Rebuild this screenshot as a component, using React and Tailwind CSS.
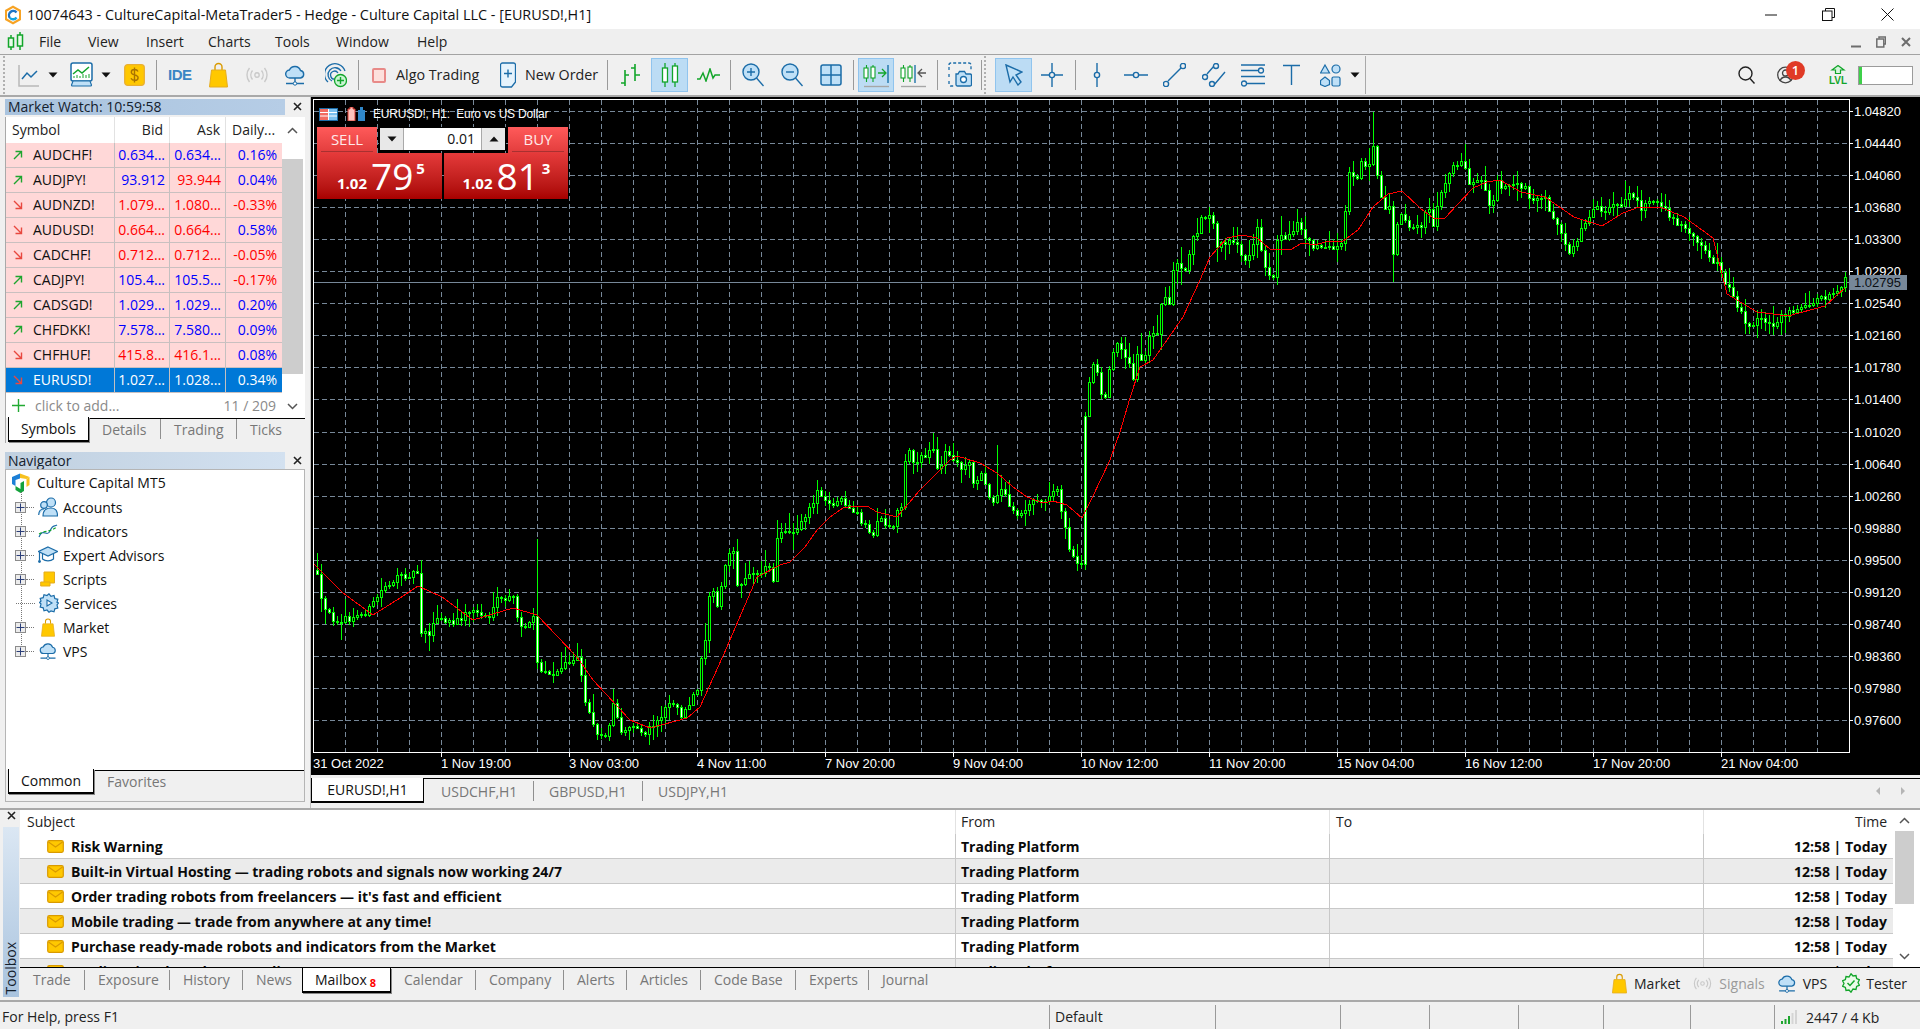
import React from "react";

const B = "#1b6ca8", L = "#bfe0f7", G = "#12a52a", Y = "#ffc800", YD = "#d99a00";

/* ---------- chart data, traced from the picture in page coordinates ---------- */
const PATH = [[313,570],[317,577],[322,607],[333,618],[350,620],[368,610],[385,585],[400,577],[417,571],[421,630],[429,632],[437,618],[453,624],[470,610],[490,617],[497,600],[513,598],[518,623],[528,627],[533,617],[537,663],[542,675],[557,673],[563,663],[577,660],[582,677],[585,702],[590,715],[597,733],[607,737],[613,700],[618,720],[622,732],[633,727],[643,733],[657,720],[670,700],[682,717],[693,695],[698,690],[702,647],[707,630],[710,578],[717,607],[725,562],[730,552],[734,553],[738,598],[743,578],[760,570],[770,567],[773,578],[778,530],[793,530],[805,518],[813,500],[817,493],[822,493],[825,500],[837,503],[842,496],[845,507],[850,512],[857,513],[862,522],[873,533],[878,516],[882,523],[893,524],[897,509],[901,510],[905,463],[910,444],[913,462],[920,458],[933,451],[937,465],[942,464],[946,451],[950,458],[962,468],[970,462],[973,480],[982,473],[989,495],[993,503],[997,495],[1002,488],[1006,497],[1009,508],[1017,517],[1025,510],[1029,503],[1042,502],[1048,495],[1057,490],[1062,520],[1065,527],[1069,552],[1073,555],[1077,565],[1081,565],[1085,416],[1089,380],[1093,366],[1097,372],[1102,398],[1106,398],[1109,366],[1113,352],[1117,343],[1127,357],[1133,377],[1137,357],[1145,357],[1150,333],[1157,333],[1162,293],[1170,303],[1173,273],[1178,260],[1187,273],[1190,243],[1197,233],[1202,217],[1210,215],[1213,220],[1217,247],[1230,240],[1242,253],[1247,265],[1257,228],[1262,253],[1267,272],[1273,278],[1277,237],[1287,240],[1297,220],[1305,240],[1317,247],[1337,248],[1342,240],[1349,175],[1358,177],[1362,158],[1367,172],[1373,148],[1378,180],[1382,207],[1390,205],[1393,257],[1398,212],[1405,223],[1417,227],[1422,228],[1427,200],[1433,227],[1438,203],[1447,180],[1453,165],[1462,158],[1470,188],[1482,178],[1490,208],[1497,183],[1518,186],[1530,195],[1545,200],[1562,233],[1567,257],[1578,235],[1592,211],[1619,205],[1628,196],[1645,208],[1660,200],[1668,218],[1685,228],[1702,243],[1715,262],[1727,285],[1745,324],[1760,318],[1776,322],[1790,312],[1806,305],[1825,296],[1846,279]];

const MA = [[313,563],[343,593],[373,615],[400,598],[418,586],[442,597],[473,620],[513,608],[537,615],[577,657],[593,680],[630,720],[650,728],[687,718],[700,707],[727,647],[757,577],[780,565],[790,562],[805,547],[817,530],[830,517],[843,508],[855,506],[867,506],[877,512],[897,517],[920,490],[933,477],[950,460],[957,456],[980,463],[997,473],[1013,487],[1027,497],[1043,503],[1053,501],[1067,505],[1082,518],[1092,498],[1110,460],[1120,432],[1130,398],[1140,367],[1153,360],[1167,340],[1183,317],[1200,280],[1210,257],[1227,238],[1242,235],[1257,238],[1270,249],[1290,250],[1302,243],[1315,245],[1325,242],[1343,241],[1358,230],[1373,207],[1388,194],[1402,191],[1420,208],[1433,218],[1445,218],[1457,205],[1473,188],[1487,182],[1500,180],[1521,192],[1545,197],[1574,217],[1602,226],[1623,213],[1639,207],[1660,207],[1684,217],[1713,238],[1727,294],[1757,312],[1788,316],[1825,306],[1845,288]];

const SPIKE_HIGH = { 1373: 112, 537: 539, 997: 445, 1417: 215, 1641: 190 };
const SPIKE_LOW = { 1393: 282, 1085: 570, 653: 740 };

function at(x) {
  for (let i = 1; i < PATH.length; i++) {
    if (x <= PATH[i][0]) {
      const [a, b] = PATH[i - 1], [c, d] = PATH[i];
      return b + ((d - b) * (x - a)) / (c - a);
    }
  }
  return PATH[PATH.length - 1][1];
}

function buildCandles() {
  let s = 12345;
  const r = () => ((s = (s * 16807) % 2147483647) / 2147483647);
  let wick = "", bull = "", bear = "";
  let prev = at(313);
  for (let x = 317; x <= 1845; x += 4) {
    const amp = x > 1500 ? 10 : 7;
    const c = Math.round(at(x) + (r() - 0.5) * amp);
    const o = Math.round(prev);
    const top = Math.min(o, c), bot = Math.max(o, c) === top ? top + 1 : Math.max(o, c);
    const hi = SPIKE_HIGH[x] ?? Math.round(top - 1 - r() * r() * 20);
    const lo = SPIKE_LOW[x] ?? Math.round(bot + 1 + r() * r() * 18);
    wick += `M${x + 0.5} ${hi}V${lo}`;
    const rect = `M${x - 0.5} ${top + 0.5}h2V${bot + 0.5}h-2Z`;
    if (c < o && x !== 1085) bull += rect;
    else bear += rect;
    prev = c;
  }
  return { wick, bull, bear };
}

const PRICES = ["1.04820","1.04440","1.04060","1.03680","1.03300","1.02920","1.02540","1.02160","1.01780","1.01400","1.01020","1.00640","1.00260","0.99880","0.99500","0.99120","0.98740","0.98360","0.97980","0.97600"];
const TIMES = ["31 Oct 2022","1 Nov 19:00","3 Nov 03:00","4 Nov 11:00","7 Nov 20:00","9 Nov 04:00","10 Nov 12:00","11 Nov 20:00","15 Nov 04:00","16 Nov 12:00","17 Nov 20:00","21 Nov 04:00"];

function ChartCanvas() {
  const { wick, bull, bear } = React.useMemo(buildCandles, []);
  const vx = [];
  for (let x = 345.5; x < 1848; x += 32) vx.push(x);
  const hy = PRICES.map((_, k) => Math.round(111 + k * 32.05) + 0.5);
  return (
    <svg viewBox="311 97 1609 678" className="block w-full h-full font-['Liberation_Sans',sans-serif]" shapeRendering="crispEdges">
      <rect x="311" y="97" width="1609" height="678" fill="#000" />
      <g stroke="#778899" strokeWidth="1" strokeDasharray="5 3">
        {vx.map((x) => <path key={x} d={`M${x} 100V752`} />)}
        {hy.map((y) => <path key={y} d={`M314 ${y}H1848`} />)}
      </g>
      <path d="M314 282.5H1849" stroke="#778899" />
      <path d={wick} stroke="#00ff00" fill="none" />
      <path d={bull} stroke="#00ff00" fill="#000" />
      <path d={bear} stroke="#00ff00" fill="#fff" />
      <polyline points={MA.map((p) => p.join(",")).join(" ")} fill="none" stroke="#ff0000" strokeWidth="1" />
      <path d="M313.5 99.5H1849V752.5H313.5Z" fill="none" stroke="#fff" />
      {hy.map((y, k) => (
        <g key={y}>
          <path d={`M1849 ${y}h4`} stroke="#fff" />
          <text x="1854" y={y + 4.5} fill="#fff" fontSize="13" shapeRendering="auto">{PRICES[k]}</text>
        </g>
      ))}
      <rect x="1849" y="275" width="58" height="15" fill="#778899" />
      <text x="1854" y="287" fill="#0b0f14" fontSize="13">1.02795</text>
      {TIMES.map((t, k) => (
        <g key={t}>
          {k > 0 && <path d={`M${441.5 + (k - 1) * 128} 752v5`} stroke="#fff" />}
          <text x={k === 0 ? 313 : 441 + (k - 1) * 128} y="768" fill="#fff" fontSize="13">{t}</text>
        </g>
      ))}
    </svg>
  );
}

/* ---------- icons ---------- */
const Ico = ({ w = 22, h = 24, vb, className = "", children }) => (
  <svg width={w} height={h} viewBox={vb || `0 0 ${w} ${h}`} fill="none" className={"shrink-0 " + className}>{children}</svg>
);
const Caret = ({ className = "" }) => (
  <Ico w={10} h={6} className={className}><path d="M0.5 0.5h9L5 5.5Z" fill="#111" /></Ico>
);
const Sep = ({ className = "" }) => <div className={"w-px h-[30px] bg-[#9a9a9a] shrink-0 " + className} />;
const Grip = ({ className = "" }) => <div className={"w-[3px] h-[38px] shrink-0 border-l-2 border-dotted border-[#b0b0b0] " + className} />;
const Active = ({ className = "", children }) => (
  <div className={"h-[34px] shrink-0 flex items-center justify-center bg-[#bcdcf4] border border-[#90c4ee] " + className}>{children}</div>
);

const IcoLine = () => (<Ico w={22} h={24}><path d="M1 2v21h20" stroke="#b8b8b8" strokeWidth="1.5" /><path d="M4 16l5-6 4 4 6-6" stroke={B} strokeWidth="1.5" /></Ico>);
const IcoMonitor = () => (<Ico w={23} h={26}><rect x="1" y="1" width="21" height="18" rx="2" fill="#fff" stroke={B} strokeWidth="1.5" /><path d="M3 12l5-4 4 3 7-6" stroke={G} strokeWidth="1.5" /><path d="M4 16v-2M7 16v-3M10 16v-2M13 16v-4M16 16v-3M19 16v-4" stroke={G} /><path d="M3 19h17l1.5 4a1 1 0 01-1 1H2.5a1 1 0 01-1-1Z" fill={L} stroke={B} strokeWidth="1.2" /></Ico>);
const IcoDollar = () => (<Ico w={21} h={22}><rect x="0.7" y="0.7" width="19.6" height="20.6" rx="3" fill={Y} stroke="#eab030" strokeWidth="1.3" /><path d="M14 7.5c-.6-1.4-2-2-3.500-2-1.800 0-3.200 1-3.200 2.700 0 3.600 6.800 1.800 6.800 5.500 0 1.700-1.500 2.700-3.400 2.700-1.700 0-3-.8-3.700-2.200M10.500 3.500v15" stroke="#a97400" strokeWidth="1.4" /></Ico>);
const IcoBag = ({ w = 19, h = 26 }) => (<Ico w={w} h={h} vb="0 0 19 26"><path d="M6 8V5a3.500 3.500 0 017 0v3" stroke={YD} strokeWidth="1.4" /><path d="M2.500 8h14l2 17H.5Z" fill={Y} stroke="#e5ac1e" /></Ico>);
const IcoSignal = ({ w = 22, h = 16 }) => (<Ico w={w} h={h} vb="0 0 22 16"><g stroke="#c9c9c9" strokeWidth="1.4"><circle cx="11" cy="8" r="2.200" /><path d="M6.500 3.500a7 7 0 000 9M15.500 3.500a7 7 0 010 9M3.500 1a11 11 0 000 14M18.500 1a11 11 0 010 14" /></g></Ico>);
const IcoCloud = ({ w = 20, h = 24 }) => (<Ico w={w} h={h} vb="0 0 20 24"><path d="M5 15a4 4 0 01-.6-8A6 6 0 0115.500 7.500 3.800 3.800 0 0115.500 15Z" fill={L} stroke={B} strokeWidth="1.4" /><path d="M10 15v5M1 20.500h18" stroke={B} strokeWidth="1.4" /><circle cx="10" cy="20.500" r="1.700" fill="#fff" stroke={B} /></Ico>);
const IcoGlobe = () => (<Ico w={22} h={26}><g stroke={B} strokeWidth="1.3"><path d="M3 20A10.500 10.500 0 1120 9" /><path d="M7 19A7 7 0 1116 9" /><path d="M10.500 17a4 4 0 112.500-6" /></g><circle cx="15.500" cy="18.500" r="6" fill="#c9f5d2" stroke={G} strokeWidth="1.3" /><path d="M15.500 15v7M12 18.500h7" stroke={G} strokeWidth="1.4" /></Ico>);
const IcoOrder = () => (<Ico w={16} h={26}><path d="M2.500 1h11a2 2 0 012 2v17l-4 5h-9a2 2 0 01-2-2V3a2 2 0 012-2Z" fill="#e6f3fc" stroke={B} strokeWidth="1.3" /><path d="M8 7.500v8M4 11.500h8" stroke={B} strokeWidth="1.4" /></Ico>);
const IcoBars = () => (<Ico w={21} h={24}><g stroke={G} strokeWidth="1.600"><path d="M5 7v16M1 20h4M5 12h4" /><path d="M15 1v17M11 5h4M15 12h5" /></g></Ico>);
const IcoCandles = () => (<Ico w={18} h={26}><g stroke={G} strokeWidth="1.300" fill="#fff"><path d="M4 1v24M14 1v24" /><rect x="1.500" y="6" width="5" height="14" /><rect x="11.500" y="4" width="5" height="16" /></g></Ico>);
const IcoWave = () => (<Ico w={23} h={14}><path d="M0 11h3l3-6 3 8 4-12 3 9 2-3h5" stroke={G} strokeWidth="1.500" /></Ico>);
const IcoZoom = ({ plus }) => (<Ico w={22} h={24}><circle cx="9" cy="9" r="8" fill={L} stroke={B} strokeWidth="1.400" /><path d="M14.500 15l7 8" stroke={B} strokeWidth="1.400" /><path d={plus ? "M9 5v8M5 9h8" : "M5 9h8"} stroke={B} strokeWidth="1.400" /></Ico>);
const IcoGrid = () => (<Ico w={22} h={22}><rect x="1" y="1" width="20" height="20" rx="2" fill={L} stroke={B} strokeWidth="1.500" /><path d="M11 1v20M1 11h20" stroke={B} strokeWidth="1.500" /></Ico>);
const IcoShift = ({ active }) => (<Ico w={27} h={26}>
  <g stroke={G} strokeWidth="1.100" fill="#fff"><path d="M3.500 3v17M10 3v17" /><rect x="1" y="6" width="4" height="10" /><rect x="8" y="5" width="4" height="11" /></g>
  {active
    ? <g stroke="#0e6aa5" strokeWidth="1.300"><path d="M25 3v18" /><path d="M15 11h7M19 7l4 4-4 4" stroke={G} /></g>
    : <g stroke="#0e6aa5" strokeWidth="1.300"><path d="M15 3v18" /><path d="M26 11h-7M22 7l-4 4 4 4" stroke="#555" /></g>}
  <path d="M1 24.500h25" stroke="#a6a6a6" strokeWidth="1.400" />
</Ico>);
const IcoCamera = () => (<Ico w={24} h={26}><path d="M1 8V3a2 2 0 012-2h18a2 2 0 012 2v5M1 12v3M1 19v3a2 2 0 002 2h3" stroke={B} strokeWidth="1.300" strokeDasharray="3 2" /><path d="M8 12h2l1.500-2.500h5L18 12h4a1.500 1.500 0 011.500 1.500v9A1.500 1.500 0 0122 24H9.500A1.500 1.500 0 018 22.500Z" fill={L} stroke={B} strokeWidth="1.300" /><circle cx="15.500" cy="17.500" r="3" fill="#fff" stroke={B} strokeWidth="1.300" /></Ico>);
const IcoCursor = () => (<Ico w={18} h={22}><path d="M1 1l16 7-6 3 5 7-3 3-5-8-3 5Z" fill={L} stroke={B} strokeWidth="1.400" /></Ico>);
const IcoCross = () => (<Ico w={22} h={24}><path d="M11 0v9M11 15v9M0 12h8M14 12h8" stroke={B} strokeWidth="1.400" /><circle cx="11" cy="12" r="2.600" stroke={B} strokeWidth="1.400" /></Ico>);
const IcoV = () => (<Ico w={14} h={24}><path d="M7 0v9M7 15v9" stroke={B} strokeWidth="1.400" /><circle cx="7" cy="12" r="2.600" stroke={B} strokeWidth="1.400" /></Ico>);
const IcoH = () => (<Ico w={24} h={10}><path d="M0 5h9M15 5h9" stroke={B} strokeWidth="1.400" /><circle cx="12" cy="5" r="2.600" stroke={B} strokeWidth="1.400" /></Ico>);
const IcoTrend = () => (<Ico w={23} h={24}><path d="M5 18L18 5" stroke={B} strokeWidth="1.400" /><circle cx="3" cy="21" r="2.600" stroke={B} strokeWidth="1.400" /><circle cx="20" cy="3" r="2.600" stroke={B} strokeWidth="1.400" /></Ico>);
const IcoChannel = () => (<Ico w={24} h={24}><path d="M5 11l7-8M12 22l11-13" stroke={B} strokeWidth="1.400" /><circle cx="3" cy="14" r="2.500" fill="#f0f0f0" stroke={B} strokeWidth="1.400" /><circle cx="14" cy="3" r="2.500" fill="#f0f0f0" stroke={B} strokeWidth="1.400" /><circle cx="10" cy="21" r="2.500" fill="#f0f0f0" stroke={B} strokeWidth="1.400" /></Ico>);
const IcoFib = () => (<Ico w={24} h={24}><path d="M0 2h24M0 7.500h18M0 13.500h24M6 20.500h18" stroke={B} strokeWidth="1.400" /><circle cx="20" cy="7.500" r="2.500" fill="#f0f0f0" stroke={B} strokeWidth="1.300" /><circle cx="3" cy="20.500" r="2.500" fill="#f0f0f0" stroke={B} strokeWidth="1.300" /></Ico>);
const IcoT = () => (<Ico w={17} h={22}><path d="M0 1.500h17M8.500 1.500V21" stroke={B} strokeWidth="1.400" /></Ico>);
const IcoShapes = () => (<Ico w={21} h={24}><path d="M5 2l4.500 8h-9Z" fill={L} stroke={B} strokeWidth="1.200" /><circle cx="16" cy="6" r="4" fill={L} stroke={B} strokeWidth="1.200" /><path d="M5 14l4.500 3.500v4L5 23.500l-4.500-2v-4Z" fill={L} stroke={B} strokeWidth="1.200" /><rect x="12" y="14" width="8" height="9" rx="1.500" fill={L} stroke={B} strokeWidth="1.200" /></Ico>);
const IcoSearch = () => (<Ico w={17} h={18}><circle cx="7.500" cy="7.500" r="6.500" stroke="#222" strokeWidth="1.400" /><path d="M12 12.500l4.500 5" stroke="#222" strokeWidth="1.400" /></Ico>);
const IcoUser = () => (<Ico w={17} h={18}><circle cx="8.500" cy="9" r="7.800" stroke="#444" strokeWidth="1.300" /><circle cx="8.500" cy="7" r="3" stroke="#444" strokeWidth="1.300" /><path d="M3 15c1-3 3-4 5.500-4s4.500 1 5.500 4" stroke="#444" strokeWidth="1.300" /></Ico>);
const IcoLvl = () => (<Ico w={16} h={9}><path d="M8 .5L14 5h-3.500v3.500h-5V5H2Z" fill="#d5f5dc" stroke={G} strokeWidth="1.200" /></Ico>);
const Logo = () => (<Ico w={18} h={20}><path d="M9 .5l8 4.600v9.800l-8 4.600-8-4.600V5.100Z" fill="#f7a324" /><path d="M9 3l6 3.500v7L9 17l-6-3.500v-7Z" fill="#fff" /><path d="M12.500 7.500A4.200 4.200 0 106 13" stroke="#1f74c4" strokeWidth="2.400" /><path d="M6 13a4.200 4.200 0 006.500-.5" stroke="#12a5e0" strokeWidth="2.400" /></Ico>);
const MenuIcon = () => (<Ico w={17} h={20}><g stroke={G} strokeWidth="1.500"><path d="M4 3v15M13 0v18" /><rect x="1.500" y="6" width="5" height="9" fill="#eafbe9" /><rect x="10.500" y="3" width="5" height="11" fill="#eafbe9" /></g></Ico>);
const NavLogo = () => (<Ico w={20} h={20}><path d="M1 4l8-3.500v5L4.500 7v6L1 11Z" fill="#1b7fd6" /><path d="M9 .5L18.500 4l-3 2-6.500-1Z" fill="#f7c11e" /><path d="M18.500 4v8l-3 2V6Z" fill="#f7c11e" /><path d="M4.500 13l5 3V10l3.500-2v10l-3.500 2L4.500 17Z" fill="#14a23c" /></Ico>);
const Accounts = () => (<Ico w={20} h={20}><circle cx="13" cy="5.500" r="4.500" fill={L} stroke={B} strokeWidth="1.200" /><circle cx="6" cy="8" r="3.300" fill={L} stroke={B} strokeWidth="1.200" /><path d="M.7 18c0-4 2.300-6 5.300-6M5 19c0-5 3-8 8-8s6.500 3 6.500 8Z" fill={L} stroke={B} strokeWidth="1.200" /></Ico>);
const Indicators = () => (<Ico w={20} h={14}><path d="M1 13C5 3 9 14 12 7s4-4 7-6" stroke={B} strokeWidth="1.200" /><path d="M1 10l4-2 5-1 4-1 5-3" stroke={G} strokeWidth="1.200" strokeDasharray="3 2" /></Ico>);
const Grad = () => (<Ico w={20} h={18}><path d="M10 1L19.500 5.500 10 10 .5 5.500Z" fill={L} stroke={B} strokeWidth="1.200" /><path d="M4.500 8v5c3 2.500 8 2.500 11 0V8" stroke={B} strokeWidth="1.200" /><path d="M1.500 6v8" stroke={B} strokeWidth="1.200" /><circle cx="1.500" cy="15.500" r="1.400" fill={B} /></Ico>);
const Scroll = () => (<Ico w={15} h={16}><path d="M4 1h10.500v11H4Z" fill={Y} stroke="#e5ac1e" /><path d="M.7 11H10v4H.7Z" fill={Y} stroke="#e5ac1e" /></Ico>);
const Gear = () => (<Ico w={20} h={20}><path d="M10 .8l2 2.500 3-.8.8 3 3 .8-.8 3 1.500 .7-1.500 2 .8 3-3 .8-.8 3-3-.8L10 19.200l-2-2.200-3 .8-.8-3-3-.8.8-3L.5 9.500 2 8l-.8-2.500 3-.8.8-3 3 .8Z" fill={L} stroke={B} strokeWidth="1.200" /><path d="M8 7v6l5-3Z" stroke={B} strokeWidth="1.100" fill="#fff" /></Ico>);
const Tester = () => (<Ico w={18} h={20}><path d="M9 .8l2 2.200 3-.5.6 3 2.800 1.300-1.400 2.700 1.400 2.700-2.800 1.300-.6 3-3-.5L9 19.200l-2-2.200-3 .5-.6-3L.6 13.200 2 10.500.6 7.800l2.800-1.300.6-3 3 .5Z" stroke={G} strokeWidth="1.300" fill="#eafbe9" /><path d="M5.500 10l2.500 2.500 4.500-5" stroke={G} strokeWidth="1.500" /></Ico>);
const Env = () => (<Ico w={17} h={13}><rect x=".7" y=".7" width="15.600" height="11.600" rx="1.500" fill={Y} stroke={YD} strokeWidth="1.200" /><path d="M1.500 2l7 5 7-5" stroke={YD} strokeWidth="1.200" /></Ico>);
const Chevron = ({ down }) => (<Ico w={11} h={7}><path d={down ? "M1 1l4.500 4.500L10 1" : "M1 6l4.500-4.500L10 6"} stroke="#555" strokeWidth="1.500" /></Ico>);
const Plus = () => (
  <div className="w-[11px] h-[11px] shrink-0 border border-[#8c8c8c] bg-[#ececec] flex items-center justify-center">
    <svg width="9" height="9" viewBox="0 0 9 9"><path d="M4.500 .5v8M.5 4.500h8" stroke="#2c3f78" strokeWidth="1" /></svg>
  </div>
);
const Close = ({ className = "" }) => (
  <svg width="9" height="9" viewBox="0 0 9 9" className={"shrink-0 " + className}><path d="M1 1l7 7M8 1L1 8" stroke="#222" strokeWidth="1.600" /></svg>
);

/* ---------- bars ---------- */
function TitleBar() {
  return (
    <div className="h-[29px] bg-white flex items-center shrink-0">
      <div className="ml-[4px]"><Logo /></div>
      <span className="ml-[5px] text-[14.4px] text-[#111] whitespace-nowrap">10074643 - CultureCapital-MetaTrader5 - Hedge - Culture Capital LLC - [EURUSD!,H1]</span>
      <div className="ml-auto flex items-center mr-[26px]">
        <svg width="12" height="2" viewBox="0 0 12 2"><path d="M0 1h12" stroke="#111" /></svg>
        <svg width="13" height="13" viewBox="0 0 13 13" className="ml-[45px]" fill="none" stroke="#111"><path d="M3.500 3V.5h9v9H10" /><rect x=".5" y="3" width="9.500" height="9.500" /></svg>
        <svg width="13" height="13" viewBox="0 0 13 13" className="ml-[46px]" stroke="#111"><path d="M.5.5l12 12M12.500.5l-12 12" /></svg>
      </div>
    </div>
  );
}

function MenuBar() {
  const items = [["File", "ml-[15px] w-[49px]"], ["View", "w-[58px]"], ["Insert", "w-[62px]"], ["Charts", "w-[67px]"], ["Tools", "w-[61px]"], ["Window", "w-[81px]"], ["Help", "w-[40px]"]];
  return (
    <div className="h-[26px] bg-[#efefef] border-b border-[#a3a3a3] flex items-center shrink-0 text-[14px] text-[#222]">
      <div className="ml-[7px]"><MenuIcon /></div>
      {items.map(([t, c]) => <span key={t} className={c}>{t}</span>)}
      <div className="ml-auto mr-[9px] flex items-center gap-[15px]">
        <svg width="10" height="12" viewBox="0 0 10 12"><path d="M0 10.500h10" stroke="#6d6d6d" strokeWidth="2" /></svg>
        <svg width="10" height="12" viewBox="0 0 10 12" fill="none" stroke="#6d6d6d" strokeWidth="1.500"><path d="M3 2.500V1h6.500v7H8" /><rect x=".8" y="3" width="7" height="8" /></svg>
        <svg width="10" height="10" viewBox="0 0 10 10" stroke="#6d6d6d" strokeWidth="2"><path d="M1 1l8 8M9 1L1 9" /></svg>
      </div>
    </div>
  );
}

function Toolbar() {
  return (
    <div className="h-[42px] bg-[#f0f0f0] border-b-2 border-[#a9a9a9] flex items-center shrink-0 text-[14.3px] text-[#222]">
      <Grip className="ml-[3px]" />
      <div className="ml-[12px]"><IcoLine /></div>
      <Caret className="ml-[8px]" />
      <div className="ml-[12px]"><IcoMonitor /></div>
      <Caret className="ml-[8px]" />
      <div className="ml-[13px]"><IcoDollar /></div>
      <Sep className="ml-[11px]" />
      <span className="ml-[11px] w-[22px] text-[15px] font-semibold text-[#3a86c4] font-['Liberation_Sans',sans-serif] tracking-[-0.5px]">IDE</span>
      <div className="ml-[19px]"><IcoBag /></div>
      <div className="ml-[18px]"><IcoSignal /></div>
      <div className="ml-[17px]"><IcoCloud /></div>
      <div className="ml-[20px]"><IcoGlobe /></div>
      <Sep className="ml-[11px]" />
      <div className="ml-[13px] w-[14px] h-[15px] rounded-[2px] border-2 border-[#e88a88] bg-[#fde0dc] shrink-0" />
      <span className="ml-[10px] w-[86px] whitespace-nowrap">Algo Trading</span>
      <div className="ml-[18px]"><IcoOrder /></div>
      <span className="ml-[9px] w-[73px] whitespace-nowrap">New Order</span>
      <Sep className="ml-[9px]" />
      <div className="ml-[12px]"><IcoBars /></div>
      <Active className="ml-[10px] w-[37px]"><IcoCandles /></Active>
      <div className="ml-[9px]"><IcoWave /></div>
      <Sep className="ml-[10px]" />
      <div className="ml-[11px]"><IcoZoom plus /></div>
      <div className="ml-[17px]"><IcoZoom /></div>
      <div className="ml-[17px]"><IcoGrid /></div>
      <Sep className="ml-[11px]" />
      <Active className="ml-[4px] w-[36px]"><IcoShift active /></Active>
      <div className="ml-[6px]"><IcoShift /></div>
      <Sep className="ml-[10px]" />
      <div className="ml-[10px]"><IcoCamera /></div>
      <Sep className="ml-[9px]" />
      <Grip className="ml-[2px]" />
      <Active className="ml-[8px] w-[37px]"><IcoCursor /></Active>
      <div className="ml-[9px]"><IcoCross /></div>
      <Sep className="ml-[12px]" />
      <div className="ml-[14px]"><IcoV /></div>
      <div className="ml-[20px]"><IcoH /></div>
      <div className="ml-[15px]"><IcoTrend /></div>
      <div className="ml-[16px]"><IcoChannel /></div>
      <div className="ml-[15px]"><IcoFib /></div>
      <div className="ml-[18px]"><IcoT /></div>
      <div className="ml-[20px]"><IcoShapes /></div>
      <Caret className="ml-[9px]" />
      <div className="ml-[5px] w-px h-[38px] bg-[#a9a9a9] shrink-0" />
      <div className="ml-auto"><IcoSearch /></div>
      <div className="ml-[22px] relative">
        <IcoUser />
        <div className="absolute left-[9px] top-[-5px] w-[19px] h-[19px] rounded-full bg-[#e03a26] text-white text-[13px] font-semibold flex items-center justify-center">1</div>
      </div>
      <div className="ml-[36px] w-[16px] flex flex-col items-center">
        <IcoLvl />
        <span className="text-[10px] leading-[11px] font-semibold text-[#12a52a] mt-[1px] font-['Liberation_Sans',sans-serif]">LVL</span>
      </div>
      <div className="ml-[12px] mr-[7px] w-[55px] h-[19px] border border-[#9b9b9b] bg-white flex">
        <div className="w-[3px] bg-[#3ed04a]" />
      </div>
    </div>
  );
}

/* ---------- market watch ---------- */
const ROWS = [
  ["AUDCHF!", 1, "0.634...", "0.634...", "0.16%", "b", "b", "b"],
  ["AUDJPY!", 1, "93.912", "93.944", "0.04%", "b", "r", "b"],
  ["AUDNZD!", 0, "1.079...", "1.080...", "-0.33%", "r", "r", "r"],
  ["AUDUSD!", 0, "0.664...", "0.664...", "0.58%", "r", "r", "b"],
  ["CADCHF!", 0, "0.712...", "0.712...", "-0.05%", "r", "r", "r"],
  ["CADJPY!", 1, "105.4...", "105.5...", "-0.17%", "b", "b", "r"],
  ["CADSGD!", 1, "1.029...", "1.029...", "0.20%", "b", "b", "b"],
  ["CHFDKK!", 1, "7.578...", "7.580...", "0.09%", "b", "b", "b"],
  ["CHFHUF!", 0, "415.8...", "416.1...", "0.08%", "r", "r", "b"],
  ["EURUSD!", 0, "1.027...", "1.028...", "0.34%", "w", "w", "w"],
];
const COL = { b: "text-[#0000ff]", r: "text-[#ff0000]", w: "text-white" };
const Arrow = ({ up }) => (
  <svg width="10" height="10" viewBox="0 0 10 10" fill="none" className="shrink-0">
    {up
      ? <path d="M1 9l7-7M2.500 1.500H8.500V7.500" stroke="#1ea52f" strokeWidth="1.400" />
      : <path d="M1 1l7 7M2.500 8.500H8.500V2.500" stroke="#e8483f" strokeWidth="1.400" />}
  </svg>
);

function TabLabel({ w, children, pl = "pl-[13px]" }) {
  return <div className={"h-[20px] flex items-center text-[#777] whitespace-nowrap border-r border-[#8f8f8f] shrink-0 " + w + " " + pl}>{children}</div>;
}

function MarketWatch() {
  return (
    <div className="h-[345px] flex flex-col mt-[2px] text-[14px]">
      <div className="h-[18px] flex items-start">
        <div className="ml-[5px] w-[280px] h-[16px] bg-gradient-to-r from-[#a9c3de] to-[#b6cde6] text-[#14202c] text-[14px] leading-[15px] pl-[3px]">Market Watch: 10:59:58</div>
        <Close className="ml-[8px] mt-[3px]" />
      </div>
      <div className="ml-[5px] w-[300px] h-[326px] bg-white border-l border-[#a9a9a9] flex flex-col">
        <div className="flex flex-1 min-h-0">
          <div className="w-[276px] flex flex-col">
            <div className="h-[26px] grid grid-cols-[109px_55px_56px_56px] text-[#222]">
              <div className="pl-[6px] leading-[26px] border-r border-[#e2e2e2]">Symbol</div>
              <div className="pr-[6px] text-right leading-[26px] border-r border-[#e2e2e2]">Bid</div>
              <div className="pr-[5px] text-right leading-[26px] border-r border-[#e2e2e2]">Ask</div>
              <div className="pl-[6px] leading-[26px] whitespace-nowrap">Daily...</div>
            </div>
            {ROWS.map(([s, up, bid, ask, d, c1, c2, c3], i) => {
              const sel = i === 9;
              const bg = sel ? "bg-[#0078d7] border-[#7fb2dc]" : "bg-[#ffd8d8] border-[#c9c0c0]";
              return (
                <div key={s} className={"h-[25px] grid grid-cols-[109px_55px_56px_56px] leading-[24px] border-b border-[#c9c0c0] " + bg}>
                  <div className={"flex items-center border-r border-[#c4c0c0] " + (sel ? "text-white" : "text-[#111]")}>
                    <span className="ml-[7px]"><Arrow up={up} /></span>
                    <span className="ml-[10px]">{s}</span>
                  </div>
                  <div className={"text-right pr-[4px] border-r border-[#c4c0c0] whitespace-nowrap " + COL[c1]}>{bid}</div>
                  <div className={"text-right pr-[4px] border-r border-[#c4c0c0] whitespace-nowrap " + COL[c2]}>{ask}</div>
                  <div className={"text-right pr-[5px] whitespace-nowrap " + COL[c3]}>{d}</div>
                </div>
              );
            })}
            <div className="flex items-center h-[24px] text-[#8a8a8a]">
              <svg width="13" height="13" viewBox="0 0 13 13" className="ml-[6px]"><path d="M6.500 0v13M0 6.500h13" stroke="#22aa33" strokeWidth="1.400" /></svg>
              <span className="ml-[10px]">click to add...</span>
              <span className="ml-auto mr-[6px]">11 / 209</span>
            </div>
          </div>
          <div className="w-[21px] flex flex-col items-center">
            <div className="h-[26px] flex items-center justify-center"><Chevron /></div>
            <div className="h-[16px]" />
            <div className="w-full h-[215px] bg-[#cdcdcd]" />
            <div className="mt-auto mb-[8px]"><Chevron down /></div>
          </div>
        </div>
        <div className="h-[25px] flex bg-[#f0f0f0] shrink-0">
          <div className="ml-[2px] w-[81px] h-[25px] bg-white border-x border-b-2 border-black shadow-[1px_1px_0_#888] flex items-center justify-center text-[#111] shrink-0 relative -top-px">Symbols</div>
          <div className="flex-1 border-t border-black flex items-center h-[21px]">
            <TabLabel w="w-[72px]">Details</TabLabel>
            <TabLabel w="w-[76px]">Trading</TabLabel>
            <div className="pl-[13px] text-[#777]">Ticks</div>
          </div>
        </div>
      </div>
    </div>
  );
}

function Navigator() {
  const N = [
    [Accounts, "Accounts", true],
    [Indicators, "Indicators", true],
    [Grad, "Expert Advisors", true],
    [Scroll, "Scripts", true],
    [Gear, "Services", false],
    [() => <IcoBag w={14} h={19} />, "Market", true],
    [() => <IcoCloud w={20} h={20} />, "VPS", true],
  ];
  return (
    <div className="flex-1 flex flex-col mt-[8px] mb-[6px] text-[14px]">
      <div className="h-[17px] flex items-center">
        <div className="ml-[5px] w-[280px] h-[17px] bg-gradient-to-r from-[#c0d0e0] to-[#d3e1f0] text-[#14202c] leading-[17px] pl-[3px]">Navigator</div>
        <Close className="ml-[8px]" />
      </div>
      <div className="ml-[5px] w-[300px] flex-1 bg-white border border-[#b5b5b5] flex flex-col">
        <div className="flex-1 relative">
          <div className="flex items-center h-[25px]">
            <span className="ml-[5px]"><NavLogo /></span>
            <span className="ml-[6px] text-[#111]">Culture Capital MT5</span>
          </div>
          <div className="absolute left-[15px] top-[22px] h-[155px] border-l border-dotted border-[#777]" />
          {N.map(([I, t, p]) => (
            <div key={t} className="flex items-center h-[24px] text-[#111] relative">
              <div className="ml-[9px] w-[11px] relative z-10">{p && <Plus />}</div>
              <div className={"border-t border-dotted border-[#777] " + (p ? "w-[8px] ml-0" : "w-[19px] ml-[-10px]")} />
              <div className="w-[21px] ml-[3px] flex justify-center"><I /></div>
              <span className="ml-[5px]">{t}</span>
            </div>
          ))}
        </div>
        <div className="h-[31px] flex bg-[#f0f0f0] shrink-0">
          <div className="ml-[2px] w-[86px] h-[25px] bg-white border-x border-b-2 border-black shadow-[1px_1px_0_#888] flex items-center justify-center text-[#111] shrink-0 relative -top-px">Common</div>
          <div className="flex-1 border-t border-black flex items-center h-[22px]"><span className="pl-[13px] text-[#777]">Favorites</span></div>
        </div>
      </div>
    </div>
  );
}

/* ---------- chart overlay ---------- */
function TradePanel() {
  return (
    <div className="absolute left-[6px] top-[30px] w-[251px] text-white">
      <div className="flex h-[26px]">
        <div className="w-[60px] h-[26px] bg-gradient-to-b from-[#ff5a5a] to-[#e23c3c] flex flex-col items-center">
          <span className="text-[15px] leading-[24px] text-[#ffe9e9]">SELL</span>
          <div className="w-[52px] h-px bg-[#a83030]" />
        </div>
        <div className="ml-[2px] w-[127px] h-[24px] flex bg-[#e8e8e8] border border-black">
          <div className="w-[23px] flex items-center justify-center"><Caret /></div>
          <div className="w-[79px] bg-white text-[14px] leading-[22px] text-[#111] text-right pr-[6px] border-x border-[#a9a9a9]">0.01</div>
          <div className="flex-1 flex items-center justify-center"><svg width="10" height="6" viewBox="0 0 10 6"><path d="M.5 5.500h9L5 .5Z" fill="#111" /></svg></div>
        </div>
        <div className="ml-[2px] w-[60px] h-[26px] bg-gradient-to-b from-[#ff5a5a] to-[#e23c3c] flex flex-col items-center">
          <span className="text-[15px] leading-[24px] text-[#ffe9e9]">BUY</span>
          <div className="w-[52px] h-px bg-[#a83030]" />
        </div>
      </div>
      <div className="flex h-[46px] gap-[2px]">
        {[["79", "5", "pl-[20px]"], ["81", "3", "pl-[19px]"]].map(([big, sup, pad]) => (
          <div key={big} className={"w-[125px] h-[46px] bg-gradient-to-b from-[#e53a3a] to-[#a80000] flex items-start relative " + pad}>
            <span className="mt-[20px] text-[15px] leading-[20px] font-bold">1.02</span>
            <span className="ml-[4px] text-[37px] leading-[46px]">{big}</span>
            <span className="ml-[3px] mt-[5px] text-[15px] leading-[20px] font-bold">{sup}</span>
          </div>
        ))}
      </div>
    </div>
  );
}

function ChartHeader() {
  return (
    <div className="absolute left-[8px] top-[8px] flex items-center text-white text-[12px] tracking-[-0.2px] font-['Liberation_Sans',sans-serif] whitespace-pre">
      <svg width="19" height="13" viewBox="0 0 19 13" fill="none"><rect x=".5" y=".5" width="18" height="12" fill="#fff" stroke="#1b6ca8" /><rect x="1" y="1" width="8" height="11" fill="#f26b60" /><rect x="10" y="1" width="8" height="11" fill="#7cc0ee" /><path d="M1 4.500h17M1 8h17" stroke="#fff" /></svg>
      <svg width="19" height="14" viewBox="0 0 19 14" className="ml-[9px]" fill="none"><path d="M1 2h2v-2h3v2h2v12H1Z" fill="#fbc3bc" stroke="#d8392e" /><path d="M11 3h2V0h3v3h2v11h-7Z" fill="#2f87c9" /></svg>
      <span className="ml-[7px]">EURUSD!, H1:  Euro vs US Dollar</span>
    </div>
  );
}

function Chart() {
  return (
    <div className="h-[678px] relative shrink-0 bg-black">
      <ChartCanvas />
      <ChartHeader />
      <TradePanel />
    </div>
  );
}

function ChartTabs() {
  return (
    <div className="h-[25px] mt-[3px] flex text-[14px] shrink-0 bg-[#f0f0f0] border-t border-black">
      <div className="w-[113px] h-[25px] bg-white border-x border-b-2 border-black flex items-center justify-center text-[#111] shrink-0 relative -top-px">EURUSD!,H1</div>
      <div className="flex items-center h-[24px]">
        <TabLabel w="w-[110px]" pl="pl-[17px]">USDCHF,H1</TabLabel>
        <TabLabel w="w-[109px]" pl="pl-[15px]">GBPUSD,H1</TabLabel>
        <span className="ml-[15px] text-[#777]">USDJPY,H1</span>
      </div>
      <div className="ml-auto mr-[15px] flex items-center gap-[21px]">
        <svg width="4" height="8" viewBox="0 0 4 8"><path d="M4 0v8L0 4Z" fill="#b5b5b5" /></svg>
        <svg width="4" height="8" viewBox="0 0 4 8"><path d="M0 0v8l4-4Z" fill="#b5b5b5" /></svg>
      </div>
    </div>
  );
}

/* ---------- toolbox ---------- */
const MAIL = [
  "Risk Warning",
  "Built-in Virtual Hosting — trading robots and signals now working 24/7",
  "Order trading robots from freelancers — it's fast and efficient",
  "Mobile trading — trade from anywhere at any time!",
  "Purchase ready-made robots and indicators from the Market",
  "Trading Signals and copy trading",
];

function Toolbox() {
  return (
    <div className="h-[192px] flex shrink-0 border-t-2 border-[#a9a9a9] text-[14px]">
      <div className="w-[20px] flex flex-col shrink-0">
        <div className="h-[17px] flex items-start pt-[1px] pl-[7px]"><Close /></div>
        <div className="ml-[3px] w-[16px] h-[170px] bg-gradient-to-t from-[#a9c3de] to-[#dbe7f3] flex flex-col justify-end items-center pb-[3px]">
          <span className="[writing-mode:vertical-rl] rotate-180 text-[14px] leading-[16px] text-[#14202c]">Toolbox</span>
        </div>
      </div>
      <div className="flex-1 flex flex-col min-w-0">
        <div className="h-[158px] flex overflow-hidden border-b border-black">
          <div className="w-[1873px] bg-white overflow-hidden">
            <div className="h-[24px] grid grid-cols-[936px_374px_374px_189px] leading-[24px] text-[#222]">
              <div className="pl-[7px] border-r border-[#e2e2e2]">Subject</div>
              <div className="pl-[5px] border-r border-[#e2e2e2]">From</div>
              <div className="pl-[6px] border-r border-[#e2e2e2]">To</div>
              <div className="text-right pr-[6px]">Time</div>
            </div>
            {MAIL.map((m, i) => (
              <div key={m} className={"h-[25px] grid grid-cols-[936px_374px_374px_189px] items-center border-b border-[#c8c8c8] font-bold text-[#0a0a0a] " + (i % 2 ? "bg-[#ebebeb]" : "bg-white")}>
                <div className="h-full flex items-center border-r border-[#c8c8c8] pl-[27px]">
                  <Env />
                  <span className="ml-[7px] whitespace-nowrap">{m}</span>
                </div>
                <div className="h-full flex items-center border-r border-[#c8c8c8] pl-[5px]">Trading Platform</div>
                <div className="h-full border-r border-[#c8c8c8]" />
                <div className="h-full flex items-center justify-end pr-[6px]">12:58 | Today</div>
              </div>
            ))}
          </div>
          <div className="w-[27px] flex flex-col items-start pl-[2px] bg-white">
            <div className="h-[21px] w-[19px] flex items-center justify-center"><Chevron /></div>
            <div className="w-[19px] h-[73px] bg-[#cdcdcd]" />
            <div className="mt-auto mb-[7px] w-[19px] flex justify-center"><Chevron down /></div>
          </div>
        </div>
        <div className="h-[23px] flex items-center">
          <TabLabel w="w-[65px]">Trade</TabLabel>
          <TabLabel w="w-[85px]">Exposure</TabLabel>
          <TabLabel w="w-[73px]">History</TabLabel>
          <div className="w-[59px] pl-[13px] text-[#777] shrink-0">News</div>
          <div className="w-[89px] h-[25px] self-start bg-white border-x border-b-2 border-black shadow-[1px_1px_0_#888] flex items-center pl-[12px] text-[#111] shrink-0 relative">Mailbox<span className="text-[11px] font-bold text-[#ff0000] ml-[3px] mt-[7px] leading-[10px]">8</span></div>
          <TabLabel w="w-[85px]">Calendar</TabLabel>
          <TabLabel w="w-[88px]">Company</TabLabel>
          <TabLabel w="w-[63px]">Alerts</TabLabel>
          <TabLabel w="w-[74px]">Articles</TabLabel>
          <TabLabel w="w-[95px]">Code Base</TabLabel>
          <TabLabel w="w-[73px]">Experts</TabLabel>
          <div className="pl-[13px] text-[#777]">Journal</div>
          <div className="ml-auto mr-[13px] mt-[7px] flex items-center text-[#222]">
            <IcoBag w={15} h={21} />
            <span className="ml-[7px]">Market</span>
            <span className="ml-[13px]"><IcoSignal w={19} h={13} /></span>
            <span className="ml-[7px] text-[#9a9a9a]">Signals</span>
            <span className="ml-[13px]"><IcoCloud w={18} h={21} /></span>
            <span className="ml-[7px]">VPS</span>
            <span className="ml-[15px]"><Tester /></span>
            <span className="ml-[6px]">Tester</span>
          </div>
        </div>
      </div>
    </div>
  );
}

function StatusBar() {
  const Cell = ({ w, children }) => <div className={"h-[24px] border-l border-[#9a9a9a] shrink-0 " + w}>{children}</div>;
  return (
    <div className="h-[29px] flex items-end border-t-2 border-[#a9a9a9] text-[14px] text-[#222] shrink-0 pb-0 bg-[#f0f0f0]">
      <div className="w-[1049px] h-[24px] pl-[2px] leading-[24px] shrink-0 whitespace-nowrap">For Help, press F1</div>
      <Cell w="w-[166px] pl-[5px] leading-[24px]">Default</Cell>
      <Cell w="w-[125px]" />
      <Cell w="w-[89px]" />
      <Cell w="w-[89px]" />
      <Cell w="w-[85px]" />
      <Cell w="w-[87px]" />
      <Cell w="w-[84px]" />
      <div className="h-[24px] border-l border-[#9a9a9a] flex-1 flex items-center pl-[6px]">
        <svg width="18" height="16" viewBox="0 0 18 16"><path d="M1 15v-3M4.500 15v-5M8 15V7" stroke="#1ea52f" strokeWidth="2" /><path d="M11.500 15V4M15 15V1" stroke="#d5d5d5" strokeWidth="2" /></svg>
        <span className="ml-[7px] whitespace-nowrap">2447 / 4 Kb</span>
      </div>
    </div>
  );
}

export default function App() {
  return (
    <div className="w-[1920px] h-[1029px] overflow-hidden flex flex-col bg-[#f0f0f0] font-['Open_Sans',sans-serif]">
      <TitleBar />
      <MenuBar />
      <Toolbar />
      <div className="flex h-[711px] shrink-0">
        <div className="w-[311px] shrink-0 flex flex-col border-r border-[#bdbdbd]">
          <MarketWatch />
          <Navigator />
        </div>
        <div className="flex-1 min-w-0 flex flex-col">
          <Chart />
          <ChartTabs />
        </div>
      </div>
      <Toolbox />
      <StatusBar />
    </div>
  );
}
